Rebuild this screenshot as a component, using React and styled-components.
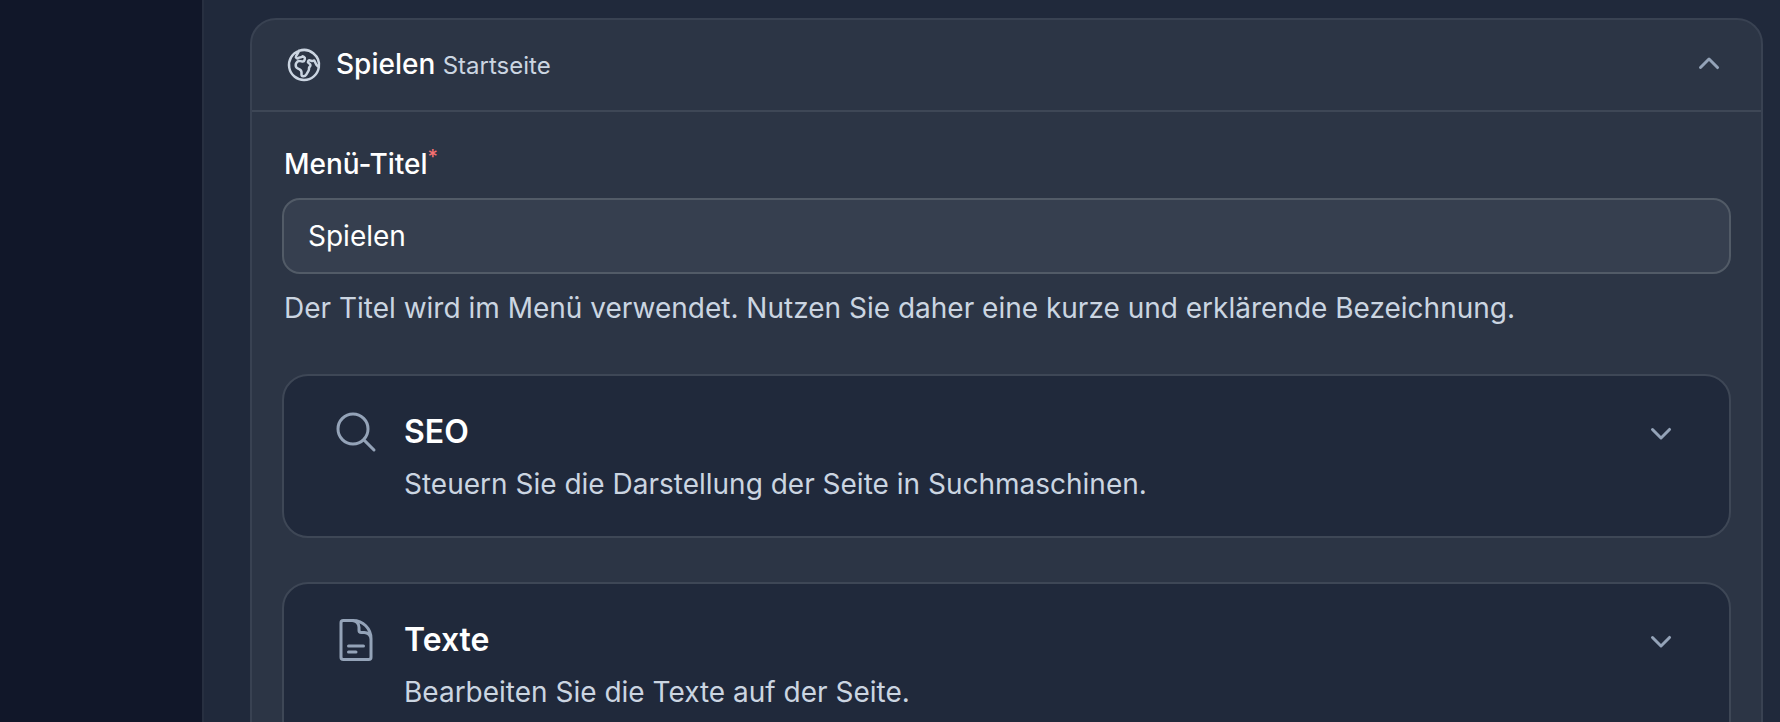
import React, { useState } from 'react';
import styled, { createGlobalStyle } from 'styled-components';
import {
  HiOutlineGlobeEuropeAfrica,
  HiOutlineMagnifyingGlass,
  HiOutlineDocumentText,
  HiMiniChevronDown,
  HiMiniChevronUp,
} from 'react-icons/hi2';

const sections = [
  {
    title: 'SEO',
    text: 'Steuern Sie die Darstellung der Seite in Suchmaschinen.',
    Icon: HiOutlineMagnifyingGlass,
  },
  {
    title: 'Texte',
    text: 'Bearbeiten Sie die Texte auf der Seite.',
    Icon: HiOutlineDocumentText,
  },
];

export default function App() {
  const [title, setTitle] = useState('Spielen');

  return (
    <Page>
      <GlobalStyle />
      <Sidebar />
      <Main>
        <Panel>
          <PanelHeader>
            <HiOutlineGlobeEuropeAfrica />
            <PanelTitle>
              Spielen <small>Startseite</small>
            </PanelTitle>
            <Toggle type="button" aria-label="Spielen einklappen" aria-expanded="true">
              <HiMiniChevronUp />
            </Toggle>
          </PanelHeader>
          <PanelBody>
            <Field>
              <Label htmlFor="menu-title">
                Menü-Titel<sup>*</sup>
              </Label>
              <Input
                id="menu-title"
                type="text"
                required
                aria-describedby="menu-title-help"
                value={title}
                onChange={(e) => setTitle(e.target.value)}
              />
              <Help id="menu-title-help">
                Der Titel wird im Menü verwendet. Nutzen Sie daher eine kurze und erklärende Bezeichnung.
              </Help>
            </Field>
            {sections.map(({ title, text, Icon }) => (
              <Section key={title}>
                <Icon />
                <div>
                  <SectionTitle>{title}</SectionTitle>
                  <SectionText>{text}</SectionText>
                </div>
                <Toggle type="button" aria-label={`${title} ausklappen`} aria-expanded="false">
                  <HiMiniChevronDown />
                </Toggle>
              </Section>
            ))}
          </PanelBody>
        </Panel>
      </Main>
    </Page>
  );
}

const GlobalStyle = createGlobalStyle`
  * {
    box-sizing: border-box;
  }

  body {
    margin: 0;
    background-color: #20293b;
    color: #fff;
    font-family: Inter, "Liberation Sans", sans-serif;
    font-size: 28px;
    line-height: 40px;
  }
`;

const Page = styled.div`
  display: flex;
  height: 100vh;
  overflow: hidden;
`;

const Sidebar = styled.aside`
  flex: 0 0 204px;
  background-color: #111729;
  border-right: 2px solid #272f40;
`;

const Main = styled.main`
  flex: 1;
  padding: 18px 17px 0 46px;
`;

const Panel = styled.section`
  background-color: #2c3545;
  border: 2px solid #394252;
  border-radius: 26px;
`;

const PanelHeader = styled.header`
  display: flex;
  align-items: center;
  height: 92px;
  padding: 0 32px;
  border-bottom: 2px solid #3e4756;

  > svg {
    width: 40px;
    height: 40px;
    color: #cbd5e1;
  }
`;

const PanelTitle = styled.h2`
  flex: 1;
  margin: 0 0 0 12px;
  font-size: 28px;
  font-weight: 500;

  small {
    color: #cbd5e1;
    font-size: 24px;
    font-weight: 400;
  }
`;

const Toggle = styled.button`
  display: flex;
  align-items: center;
  width: 40px;
  height: 48px;
  padding: 0;
  border: 0;
  background: none;
  color: #94a3b8;
  cursor: pointer;

  svg {
    width: 40px;
    height: 40px;
  }
`;

const PanelBody = styled.div`
  display: flex;
  flex-direction: column;
  gap: 44px;
  padding: 32px 30px;
`;

const Field = styled.div`
  display: flex;
  flex-direction: column;
  padding-bottom: 2px;
`;

const Label = styled.label`
  padding: 0 2px;
  font-weight: 500;

  sup {
    color: #f87171;
    font-size: 20px;
    line-height: 0;
  }
`;

const Input = styled.input`
  width: 100%;
  height: 76px;
  margin: 14px 0;
  padding: 0 24px;
  border: 2px solid #525b67;
  border-radius: 18px;
  background-color: #363f4f;
  color: #fff;
  font: inherit;

  &:focus {
    outline: 0;
    border-color: #94a3b8;
  }
`;

const Help = styled.p`
  margin: 0;
  padding: 0 2px;
  color: #cbd5e1;
`;

const Section = styled.section`
  display: flex;
  align-items: flex-start;
  padding: 32px 48px;
  border: 2px solid #3e4756;
  border-radius: 26px;
  background-color: #20293b;

  > svg {
    width: 48px;
    height: 48px;
    color: #94a3b8;
  }

  > div {
    flex: 1;
    margin-left: 24px;
  }
`;

const SectionTitle = styled.h3`
  margin: 0 0 8px;
  font-size: 32px;
  font-weight: 600;
  line-height: 48px;
`;

const SectionText = styled.p`
  margin: 0;
  color: #cbd5e1;
`;
